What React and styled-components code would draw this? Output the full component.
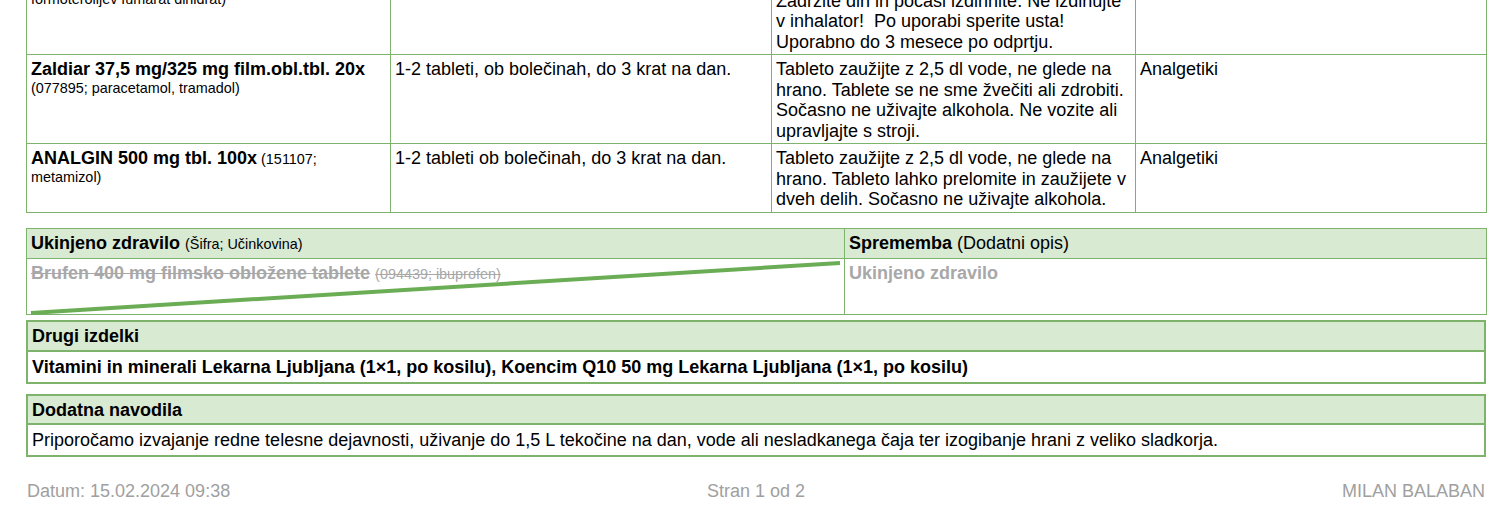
import React from 'react';
import styled, { createGlobalStyle } from 'styled-components';

const BORDER = '#7db36a';
const HEAD_BG = '#d9ead3';

const Global = createGlobalStyle`
    body {
        margin: 0;
        background: #fff;
        font-family: "Liberation Sans", Arial, sans-serif;
        color: #000;
        overflow: hidden;
    }
`;

const Page = styled.div`
    width: 1460px;
    margin: -35px 0 0 26px;
    font-size: 18px;
    line-height: 1.15;
`;

const Table = styled.table`
    width: 100%;
    table-layout: fixed;
    border-collapse: collapse;
    margin-top: ${p => p.$gap || 0}px;
    line-height: 20.5px;
`;

const Td = styled.td`
    border: 1px solid ${BORDER};
    padding: 4px 4px 2px;
    vertical-align: top;
    color: ${p => (p.$muted ? '#a8a8a8' : '#000')};
`;

// drug cell: small base size so the wrapped code line stays tight
const DrugTd = styled(Td)`
    font-size: 14.4px;
    line-height: 1.15;
`;

const Th = styled.th`
    border: 1px solid ${BORDER};
    background: ${HEAD_BG};
    padding: 4px 4px 5px;
    text-align: left;
    font-weight: normal;
    line-height: 1.15;
`;

const Name = styled.b`
    font-size: 18px;
    font-weight: bold;
    text-decoration: ${p => (p.$struck ? 'line-through' : 'none')};
`;

const Sub = styled.span`
    font-size: 14.4px;
    text-decoration: ${p => (p.$struck ? 'line-through' : 'none')};
`;

const Crossed = styled.div`
    position: relative;
    min-height: 49px;
`;

const CrossLine = styled.svg`
    position: absolute;
    left: 0;
    top: 0;
    width: 100%;
    height: 100%;
    overflow: visible;
    pointer-events: none;
`;

const Box = styled.section`
    border: 2px solid ${BORDER};
    margin-top: ${p => p.$gap}px;
`;

const BoxHead = styled.div`
    background: ${HEAD_BG};
    border-bottom: 2px solid ${BORDER};
    padding: 4px 4px 3px;
    font-weight: bold;
`;

const BoxBody = styled.div`
    padding: 5px 4px 4px;
    font-weight: ${p => (p.$bold ? 'bold' : 'normal')};
`;

const Footer = styled.footer`
    display: grid;
    grid-template-columns: 1fr auto 1fr;
    margin-top: 24px;
    color: #a0a0a0;
    padding: 0 1px;

    & span:last-child {
        justify-self: end;
    }
`;

const therapy = [
    {
        name: 'Symbicort Turbuhaler',
        sub: '(081159; budezonid, formoterolijev fumarat dihidrat)',
        dose: '1 vdih 2-krat na dan.',
        note: [
            'Pred vdihom popolnoma izdihnite.',
            'Zadržite dih in počasi izdihnite. Ne izdihujte',
            'v inhalator!\u00a0 Po uporabi sperite usta!',
            'Uporabno do 3 mesece po odprtju.',
        ],
        group: 'Antiastmatiki',
    },
    {
        name: 'Zaldiar 37,5 mg/325 mg film.obl.tbl. 20x',
        sub: '(077895; paracetamol, tramadol)',
        dose: '1-2 tableti, ob bolečinah, do 3 krat na dan.',
        note: ['Tableto zaužijte z 2,5 dl vode, ne glede na hrano. Tablete se ne sme žvečiti ali zdrobiti. Sočasno ne uživajte alkohola. Ne vozite ali upravljajte s stroji.'],
        group: 'Analgetiki',
    },
    {
        name: 'ANALGIN 500 mg tbl. 100x',
        sub: '(151107; metamizol)',
        dose: '1-2 tableti ob bolečinah, do 3 krat na dan.',
        note: ['Tableto zaužijte z 2,5 dl vode, ne glede na hrano. Tableto lahko prelomite in zaužijete v dveh delih. Sočasno ne uživajte alkohola.'],
        group: 'Analgetiki',
    },
];

const App = () => (
    <Page>
        <Global />
        <Table>
            <colgroup>
                <col style={{ width: 364 }} />
                <col style={{ width: 381 }} />
                <col style={{ width: 364 }} />
                <col style={{ width: 351 }} />
            </colgroup>
            <tbody>
                {therapy.map(row => (
                    <tr key={row.name}>
                        <DrugTd>
                            <Name>{row.name}</Name> <Sub>{row.sub}</Sub>
                        </DrugTd>
                        <Td>{row.dose}</Td>
                        <Td>
                            {row.note.map((line, i) => (
                                <React.Fragment key={i}>
                                    {i > 0 && <br />}
                                    {line}
                                </React.Fragment>
                            ))}
                        </Td>
                        <Td>{row.group}</Td>
                    </tr>
                ))}
            </tbody>
        </Table>

        <Table $gap={15}>
            <colgroup>
                <col style={{ width: 818 }} />
                <col style={{ width: 642 }} />
            </colgroup>
            <thead>
                <tr>
                    <Th><Name>Ukinjeno zdravilo</Name> <Sub>(Šifra; Učinkovina)</Sub></Th>
                    <Th><Name>Sprememba</Name> (Dodatni opis)</Th>
                </tr>
            </thead>
            <tbody>
                <tr>
                    <Td $muted>
                        <Crossed>
                            <Name $struck>Brufen 400 mg filmsko obložene tablete</Name>{' '}
                            <Sub $struck>(094439; ibuprofen)</Sub>
                            <CrossLine viewBox="0 0 100 100" preserveAspectRatio="none">
                                <line x1="0" y1="102" x2="100" y2="0" stroke="#6aad55" strokeWidth="4" vectorEffect="non-scaling-stroke" />
                            </CrossLine>
                        </Crossed>
                    </Td>
                    <Td $muted><Name>Ukinjeno zdravilo</Name></Td>
                </tr>
            </tbody>
        </Table>

        <Box $gap={5}>
            <BoxHead>Drugi izdelki</BoxHead>
            <BoxBody $bold>
                Vitamini in minerali Lekarna Ljubljana (1×1, po kosilu), Koencim Q10 50 mg Lekarna Ljubljana (1×1, po kosilu)
            </BoxBody>
        </Box>

        <Box $gap={10}>
            <BoxHead>Dodatna navodila</BoxHead>
            <BoxBody>
                Priporočamo izvajanje redne telesne dejavnosti, uživanje do 1,5 L tekočine na dan, vode ali nesladkanega čaja ter izogibanje hrani z veliko sladkorja.
            </BoxBody>
        </Box>

        <Footer>
            <span>Datum: 15.02.2024 09:38</span>
            <span>Stran 1 od 2</span>
            <span>MILAN BALABAN</span>
        </Footer>
    </Page>
);

export default App;
